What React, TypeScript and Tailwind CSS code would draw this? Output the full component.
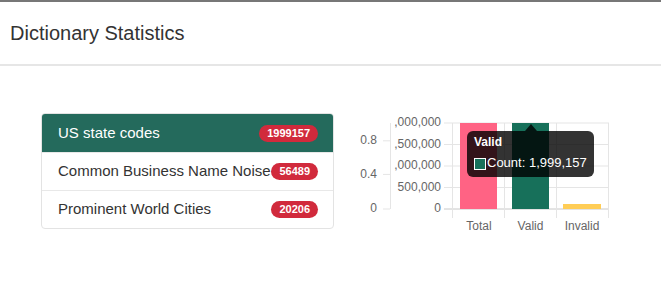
const DICTS = [
  { name: 'US state codes', count: 1999157 },
  { name: 'Common Business Name Noise', count: 56489 },
  { name: 'Prominent World Cities', count: 20206 },
]

const GRID = '#e5e5e5'
const AXIS = '#666'

function StatsChart() {
  const rightTicks = [
    { label: '2,000,000', y: 13 },
    { label: '1,500,000', y: 34.5 },
    { label: '1,000,000', y: 56 },
    { label: '500,000', y: 77.5 },
    { label: '0', y: 99 },
  ]
  const leftTicks = [
    { label: '0.8', y: 30.8 },
    { label: '0.4', y: 64.4 },
    { label: '0', y: 99 },
  ]
  const cols = [98.5, 150.5, 202.5, 254.5]

  return (
    <svg
      width={260}
      height={125}
      className="block shrink-0"
      style={{ fontFamily: '"Liberation Sans", Arial, sans-serif' }}
    >
      <defs>
        <clipPath id="rightAxisClip">
          <rect x={40.5} y={0} width={60} height={125} />
        </clipPath>
      </defs>

      {/* left axis (0 - 1) */}
      <line x1={36.5} y1={13} x2={36.5} y2={99} stroke={GRID} />
      {leftTicks.map((t) => (
        <g key={t.label}>
          <line x1={29} y1={t.y} x2={36} y2={t.y} stroke={GRID} />
          <text x={23} y={t.y} textAnchor="end" dominantBaseline="middle" fontSize={12} fill={AXIS}>
            {t.label}
          </text>
        </g>
      ))}

      {/* count axis, clipped like the real chart */}
      <g clipPath="url(#rightAxisClip)">
        {rightTicks.map((t) => (
          <text
            key={t.label}
            x={87}
            y={t.y}
            textAnchor="end"
            dominantBaseline="middle"
            fontSize={12}
            fill={AXIS}
          >
            {t.label}
          </text>
        ))}
      </g>
      {rightTicks.map((t) => (
        <line
          key={t.label}
          x1={90}
          y1={t.y}
          x2={255}
          y2={t.y}
          stroke={t.label === '0' ? '#c8c8c8' : GRID}
        />
      ))}
      {cols.map((x) => (
        <line key={x} x1={x} y1={13} x2={x} y2={108} stroke={GRID} />
      ))}

      {/* bars */}
      <rect x={106} y={13} width={37} height={86} fill="#ff6384" />
      <rect x={158} y={13} width={37} height={86} fill="#17705a" />
      <rect x={209} y={94} width={38} height={5} fill="#ffcd56" />

      {['Total', 'Valid', 'Invalid'].map((l, i) => (
        <text key={l} x={125 + i * 51.5} y={117} textAnchor="middle" dominantBaseline="middle" fontSize={12} fill={AXIS}>
          {l}
        </text>
      ))}

      {/* tooltip */}
      <path d="M171 21 L177 14 L183 21 Z" fill="rgba(0,0,0,0.8)" />
      <rect x={113} y={21} width={127} height={46} rx={6} fill="rgba(0,0,0,0.8)" />
      <text x={120} y={33} dominantBaseline="middle" fontSize={12} fontWeight="bold" fill="#fff">
        Valid
      </text>
      <rect x={120.5} y={48.5} width={11} height={11} fill="#17705a" stroke="#fff" />
      <text x={133} y={54} dominantBaseline="middle" fontSize={13} fill="#fff">
        Count: 1,999,157
      </text>
    </svg>
  )
}

export default function App() {
  return (
    <div
      className="w-[661px] h-[290px] bg-white border-t-2 border-[#777] text-[#333]"
      style={{ fontFamily: '"Liberation Sans", Arial, sans-serif' }}
    >
      <div className="h-[64px] flex items-center px-[10px] border-b-2 border-[#e6e6e6]">
        <h1 className="text-[20px] leading-none">Dictionary Statistics</h1>
      </div>

      <div className="flex items-start pl-[41px] pt-[44px]">
        <ul className="mt-[3px] w-[293px] border border-[#e3e3e3] rounded-[4px] overflow-hidden">
          {DICTS.map((d, i) => (
            <li
              key={d.name}
              className={
                i === 0
                  ? 'h-[38px] flex items-center justify-between pl-[16px] pr-[15px] bg-[#246a5c] text-white text-[15px]'
                  : 'h-[38px] flex items-center justify-between pl-[16px] pr-[15px] border-t border-[#e8e8e8] text-[#333] text-[15px]'
              }
            >
              <span className="whitespace-nowrap">{d.name}</span>
              <span className="h-[17px] flex items-center px-[8px] rounded-full bg-[#d12a3c] text-white text-[11px] font-bold">
                {d.count}
              </span>
            </li>
          ))}
        </ul>
        <div className="ml-[20px]">
          <StatsChart />
        </div>
      </div>
    </div>
  )
}
